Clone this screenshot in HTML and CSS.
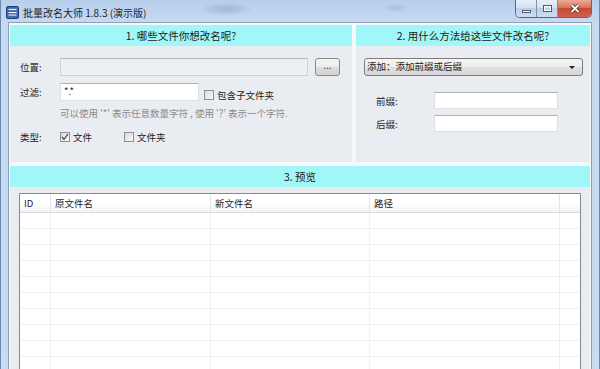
FILE: index.html
```html
<!DOCTYPE html>
<html lang="zh-CN">
<head>
<meta charset="utf-8">
<title>批量改名大师 1.8.3 (演示版)</title>
<link rel="stylesheet" href="styles.css">
</head>
<body>
<div class="window">
  <div class="titlebar">
    <svg class="appicon" width="13" height="13" viewBox="0 0 13 13">
      <rect x="0.5" y="0.5" width="12" height="12" rx="1.5" fill="#3a6cb6" stroke="#1d3f74"/>
      <path d="M2.5 3.5h8" stroke="#e8f0ff" stroke-width="1.2"/>
      <path d="M2.5 6.5h8M2.5 9h8" stroke="#ffffff" stroke-width="1"/>
    </svg>
    <span class="title">批量改名大师 1.8.3 (演示版)</span>
    <div class="controls">
      <div class="cbtn min"><span class="gmin"></span></div>
      <div class="cbtn max"><span class="gmax"></span></div>
      <div class="cbtn close">
        <svg width="10" height="9" viewBox="0 0 10 9"><path d="M1.5 1l7 7M8.5 1l-7 7" stroke="#3a1d18" stroke-width="3.2"/><path d="M1.5 1l7 7M8.5 1l-7 7" stroke="#ffffff" stroke-width="1.8"/></svg>
      </div>
    </div>
  </div>
  <div class="client">
    <div class="toprow">
      <section class="panel p1">
        <div class="phead">1. 哪些文件你想改名呢?</div>
        <div class="pbody1">
          <div class="row">
            <span class="lbl">位置:</span>
            <div class="input disabled wloc"></div>
            <div class="btn">...</div>
          </div>
          <div class="row r2">
            <span class="lbl">过滤:</span>
            <div class="input wfilter">*.*</div>
            <span class="subwrap"><span class="cb"></span><span>包含子文件夹</span></span>
          </div>
          <div class="hint">可以使用 '*' 表示任意数量字符 , 使用 '?' 表示一个字符.</div>
          <div class="row r3">
            <span class="lbl">类型:</span>
            <span class="cb checked"><svg width="8" height="8" viewBox="0 0 8 8"><path d="M1 4l2 2.3L7 1" fill="none" stroke="#3b3b3b" stroke-width="1.2"/></svg></span><span class="opt">文件</span>
            <span class="cb"></span><span>文件夹</span>
          </div>
        </div>
      </section>
      <section class="panel p2">
        <div class="phead">2. 用什么方法给这些文件改名呢?</div>
        <div class="pbody2">
          <div class="select">添加：添加前缀或后缀<span class="arrow"></span></div>
          <div class="row r4">
            <span class="lbl2">前缀:</span>
            <div class="input wfix"></div>
          </div>
          <div class="row r5">
            <span class="lbl2">后缀:</span>
            <div class="input wfix"></div>
          </div>
        </div>
      </section>
    </div>
    <section class="panel p3">
      <div class="phead">3. 预览</div>
      <div class="pbody3">
        <div class="table">
          <div class="tr th">
            <div class="td">ID</div><div class="td">原文件名</div><div class="td">新文件名</div><div class="td">路径</div><div class="td"></div>
          </div>
          <div class="tr"><div class="td"></div><div class="td"></div><div class="td"></div><div class="td"></div><div class="td"></div></div>
          <div class="tr"><div class="td"></div><div class="td"></div><div class="td"></div><div class="td"></div><div class="td"></div></div>
          <div class="tr"><div class="td"></div><div class="td"></div><div class="td"></div><div class="td"></div><div class="td"></div></div>
          <div class="tr"><div class="td"></div><div class="td"></div><div class="td"></div><div class="td"></div><div class="td"></div></div>
          <div class="tr"><div class="td"></div><div class="td"></div><div class="td"></div><div class="td"></div><div class="td"></div></div>
          <div class="tr"><div class="td"></div><div class="td"></div><div class="td"></div><div class="td"></div><div class="td"></div></div>
          <div class="tr"><div class="td"></div><div class="td"></div><div class="td"></div><div class="td"></div><div class="td"></div></div>
          <div class="tr"><div class="td"></div><div class="td"></div><div class="td"></div><div class="td"></div><div class="td"></div></div>
          <div class="tr"><div class="td"></div><div class="td"></div><div class="td"></div><div class="td"></div><div class="td"></div></div>
          <div class="tr"><div class="td"></div><div class="td"></div><div class="td"></div><div class="td"></div><div class="td"></div></div>
        </div>
      </div>
    </section>
  </div>
</div>
</body>
</html>
```

FILE: styles.css
```css
* { box-sizing: border-box; }
html, body { margin: 0; padding: 0; }
body {
  width: 600px;
  height: 369px;
  overflow: hidden;
  font-family: "Noto Sans CJK SC", "Microsoft YaHei", "Noto Sans", sans-serif;
  font-size: 9.5px;
  color: #1b1b1b;
}
.window {
  width: 600px;
  height: 369px;
  display: flex;
  flex-direction: column;
  border-left: 1px solid #6d89ad;
  border-right: 1px solid #6d89ad;
  background:
    radial-gradient(ellipse 28px 7px at 225px 9px, rgba(110,130,160,0.35), rgba(110,130,160,0)),
    radial-gradient(ellipse 12px 5px at 395px 8px, rgba(110,130,160,0.25), rgba(110,130,160,0)),
    linear-gradient(#b8cfec, #c6d9f0 22px, #c9dbf1);
}
.titlebar {
  height: 22px;
  flex: none;
  display: flex;
  align-items: center;
  padding-left: 5px;
}
.appicon { flex: none; margin-top: 2px; }
.title {
  margin-left: 4px;
  margin-top: 2px;
  font-size: 10px;
  color: #1e1e1e;
}
.controls {
  margin-left: auto;
  margin-right: 7px;
  align-self: flex-start;
  display: flex;
  height: 18px;
  border: 1px solid #56698a;
  border-top: none;
  border-radius: 0 0 5px 5px;
  overflow: hidden;
}
.cbtn {
  display: flex;
  align-items: center;
  justify-content: center;
  height: 100%;
  background: linear-gradient(#e6eef8, #d6e2f2 45%, #bccee8 50%, #cfdcef);
  border-right: 1px solid #7d91b0;
}
.cbtn.min { width: 21px; }
.cbtn.max { width: 21px; }
.cbtn.close {
  width: 33px;
  border-right: none;
  background: linear-gradient(#ebaa9a, #d8735f 45%, #c44a35 50%, #d2604a);
}
.gmin {
  width: 9px;
  height: 3px;
  margin-top: 5px;
  background: #fff;
  border: 1px solid #4a5a73;
}
.gmax {
  width: 9px;
  height: 7px;
  border: 1px solid #4a5a73;
  box-shadow: inset 0 0 0 1px #fff;
  background: transparent;
}
.client {
  flex: 1;
  margin: 0 7px;
  border: 1px solid #8b9fba;
  border-bottom: none;
  background: #f5f7fa;
  padding: 2px 1px 0 1px;
  display: flex;
  flex-direction: column;
  gap: 4px;
  overflow: hidden;
}
.toprow {
  display: flex;
  gap: 4px;
  height: 137px;
  flex: none;
}
.panel {
  background: #e9ecf0;
  display: flex;
  flex-direction: column;
}
.p1 { width: 342px; flex: none; }
.p2 { flex: 1; }
.p3 { flex: 1; min-height: 0; }
.phead {
  height: 21px;
  flex: none;
  background: #a1f7f8;
  display: flex;
  align-items: center;
  justify-content: center;
  font-size: 10.5px;
  color: #1a1a1a;
}
.row { display: flex; align-items: center; }
.lbl { width: 40px; flex: none; }
.pbody1 { padding: 12px 0 0 10px; }
.input {
  height: 18px;
  background: #fff;
  border: 1px solid #dde1e6;
  border-top-color: #aeb1b7;
  padding-left: 3px;
  line-height: 15px;
}
.input.disabled {
  background: #eceef0;
  border-color: #cdd0d4;
  border-top-color: #b4b7bc;
}
.wloc { width: 248px; }
.btn {
  width: 25px;
  height: 18px;
  margin-left: 7px;
  border: 1px solid #8a8a8a;
  border-radius: 3px;
  background: linear-gradient(#f4f4f4, #ececec 50%, #dedede 50%, #d2d2d2);
  display: flex;
  align-items: center;
  justify-content: center;
  line-height: 1;
  padding-bottom: 3px;
}
.r2 { margin-top: 7px; }
.wfilter { width: 139px; margin-right: 5px; }
.subwrap {
  display: flex;
  align-items: center;
  align-self: flex-end;
  line-height: 12px;
}
.cb {
  width: 10px;
  height: 10px;
  flex: none;
  border: 1px solid #8f8f8f;
  background: linear-gradient(135deg, #d9d9d9, #fbfbfb);
  margin-right: 3px;
  display: inline-flex;
  align-items: center;
  justify-content: center;
}
.hint {
  margin-top: 5px;
  padding-left: 40px;
  line-height: 14px;
  color: #8a8a8a;
}
.r3 { margin-top: 10px; line-height: 14px; }
.opt { width: 51px; }
.pbody2 { padding: 12px 7px 0 8px; }
.select {
  position: relative;
  height: 18px;
  border: 1px solid #7c7c7c;
  border-radius: 3px;
  background: linear-gradient(#f5f5f5, #ededed 50%, #e0e0e0 50%, #d6d6d6);
  padding-left: 2px;
  line-height: 15px;
}
.arrow {
  position: absolute;
  right: 7px;
  top: 7px;
  width: 0;
  height: 0;
  border-left: 3px solid transparent;
  border-right: 3px solid transparent;
  border-top: 3px solid #222;
}
.lbl2 { width: 70px; padding-left: 12px; flex: none; }
.r4 { margin-top: 16px; }
.r5 { margin-top: 6px; }
.wfix { width: 124px; height: 17px; }
.pbody3 {
  flex: 1;
  min-height: 0;
  padding: 6px 9px 0 9px;
  overflow: hidden;
}
.table {
  border: 1px solid #838893;
  border-bottom: none;
  background: #fff;
  height: 200px;
}
.tr {
  display: grid;
  grid-template-columns: 31px 160px 159px 190px 20px;
  height: 16px;
  border-bottom: 1px solid #f0f0f0;
}
.td { border-right: 1px solid #f0f0f0; }
.td:last-child { border-right: none; }
.th {
  height: 19px;
  border-bottom: 1px solid #d6d9de;
  background: linear-gradient(#ffffff, #ffffff 45%, #f3f4f6);
}
.th .td {
  border-right-color: #e2e4e8;
  padding-left: 4px;
  line-height: 18px;
  color: #1e1e1e;
}
.th .td:last-child { border-right: none; }
```
